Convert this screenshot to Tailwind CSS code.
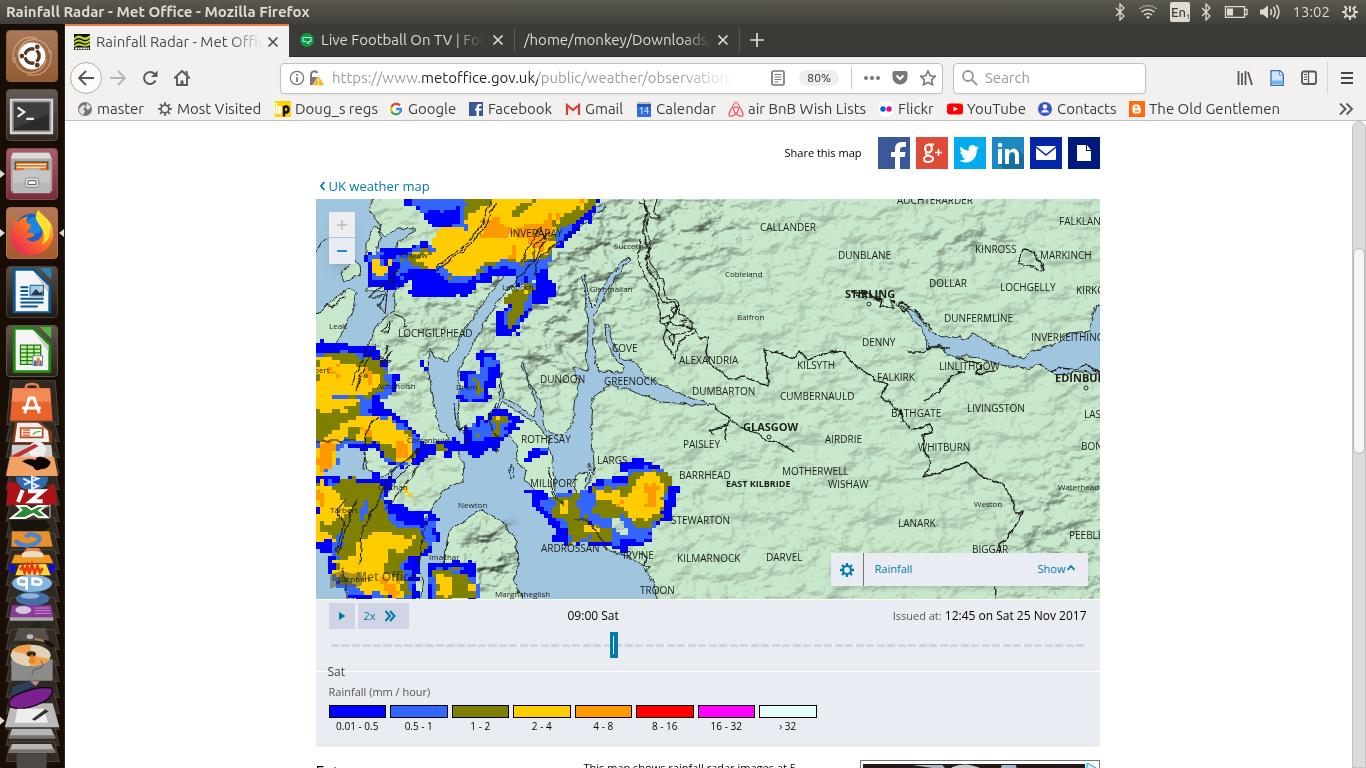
<!DOCTYPE html>
<html lang="en">
<head>
<meta charset="utf-8">
<title>Rainfall Radar - Met Office</title>
<script src="https://cdn.jsdelivr.net/npm/@tailwindcss/browser@4"></script>
</head>
<body class="h-screen flex flex-col overflow-hidden bg-white font-['Ubuntu','Noto_Sans',sans-serif] text-[#3c3c3c]">

<svg class="hidden" aria-hidden="true">
  <symbol id="bt" viewBox="0 0 12 18"><path d="M2 5l8 8-4 4V1l4 4-8 8" fill="none" stroke="#dfdbd2" stroke-width="1.3"/></symbol>
  <symbol id="x" viewBox="0 0 12 12"><path d="M1.500 1.500l9 9M10.500 1.500l-9 9" stroke="currentColor" stroke-width="1.700" fill="none"/></symbol>
  <symbol id="cog" viewBox="0 0 16 16"><circle cx="8" cy="8" r="4.500" fill="none" stroke="currentColor" stroke-width="2.400"/><path d="M8 0v3M8 13v3M0 8h3M13 8h3M2.300 2.300l2.200 2.200M11.500 11.500l2.200 2.200M2.300 13.700l2.200-2.200M11.500 4.500l2.200-2.200" stroke="currentColor" stroke-width="2.600"/></symbol>
</svg>

<header class="h-6 shrink-0 flex items-center justify-between pl-1.5 pr-2 bg-linear-to-b from-[#5b5950] to-[#403f3a] text-[#dfdbd2]">
  <h1 class="text-[15px] leading-6 font-bold">Rainfall Radar - Met Office - Mozilla Firefox</h1>
  <div class="flex items-center">
    <svg class="w-3 h-[18px] mr-3"><use href="#bt"/></svg>
    <svg class="w-5 h-4 mr-3" viewBox="0 0 20 16" fill="none" stroke="#dfdbd2" stroke-width="1.500"><path d="M1 5q9-7 18 0" opacity=".5"/><path d="M3.500 8q6.500-5 13 0M6 11q4-3 8 0"/><path d="M8 13q2-1.500 4 0l-2 2z" fill="#dfdbd2" stroke="none"/></svg>
    <span class="w-5 h-5 mr-2.5 bg-[#dfdbd2] rounded-xs text-[#3c3b37] text-[13px] leading-5 text-center font-medium">En<sub class="text-[7px]">1</sub></span>
    <svg class="w-3 h-[18px] mr-3"><use href="#bt"/></svg>
    <svg class="w-6 h-3 mr-3" viewBox="0 0 24 12"><path d="M1.500.7h19v10.600h-19zM21 3.500h2v5h-2" fill="none" stroke="#dfdbd2" stroke-width="1.300"/><path d="M3 2.500h6v7H3z" fill="#dfdbd2"/></svg>
    <svg class="w-5 h-4 mr-3" viewBox="0 0 20 16"><path d="M0 5.500h3l5-4v13l-5-4H0z" fill="#dfdbd2"/><path d="M10.500 5q2 3 0 6M13.500 3q3.500 5 0 10M16.500 1q5 7 0 14" fill="none" stroke="#dfdbd2" stroke-width="1.500"/></svg>
    <span class="text-[15px] leading-6 mr-3">13:02</span>
    <svg class="size-4" viewBox="0 0 16 16" stroke="#dfdbd2" fill="none"><path d="M5.500 4A4.700 4.700 0 1 0 10.500 4" stroke-width="1.800"/><path d="M8 2v6" stroke-width="2"/><path d="M8 13v3M0 8h3M13 8h3M2.300 2.300l2 2M11.700 11.700l2 2M2.300 13.700l2-2M11.700 4.300l2-2" stroke-width="2"/></svg>
  </div>
</header>

<div class="flex-1 min-h-0 flex">
<!-- Launcher -->
<nav aria-label="Launcher" class="w-[65px] shrink-0 relative bg-[#180e06] border-r border-[#2c2520] flex flex-col items-center gap-[7px] pt-1.5 pr-px overflow-hidden">
  <button aria-label="Dash" class="size-[52px] shrink-0 rounded-sm overflow-hidden border border-[#8b6242] bg-linear-to-b from-[#a9795a] to-[#935b31]"><svg class="size-full" viewBox="0 0 52 52"><path d="M7 33C3 15 16 3 31 8M45 20c4 18-9 29-24 25M11 25C16 0 44 8 44 23M41 29C36 51 8 46 8 27" fill="none" stroke="#e0bc9e" opacity=".6" stroke-width="1.500"/><circle cx="26" cy="26" r="14" fill="#fff"/><circle cx="26" cy="26" r="7.500" fill="none" stroke="#5a3923" stroke-width="3.500"/><path d="M26 26l-10 0M26 26l5-9M26 26l5 9" stroke="#fff" stroke-width="2"/><circle cx="26" cy="26" r="5" fill="#fff"/><g fill="#5a3923" stroke="#fff"><circle cx="15.500" cy="26" r="3"/><circle cx="31.500" cy="16.500" r="3"/><circle cx="31.500" cy="35.500" r="3"/></g></svg></button>
  <button aria-label="Terminal" class="size-[52px] shrink-0 rounded-sm overflow-hidden border border-[#544d48] bg-linear-to-b from-[#625b57] to-[#332a25]"><svg class="size-full" viewBox="0 0 52 52"><path d="M3 9h45v37H3z" fill="#dcdcdc"/><path d="M5 11h41v33H5z" fill="#9a9a9a"/><path d="M7 13h37v29H7z" fill="#2b2b2b"/><path d="M7 13h37v12L7 40z" fill="#4a4a4a" opacity=".6"/><path d="M11 18l7 5-7 5" fill="none" stroke="#eee" stroke-width="2.200"/><path d="M20 30h8" stroke="#eee" stroke-width="2.200"/></svg></button>
  <button aria-label="Files" class="size-[52px] shrink-0 rounded-sm overflow-hidden border border-[#8e4653] bg-linear-to-b from-[#a4616b] to-[#7a2a38]"><svg class="size-full" viewBox="0 0 52 52"><path d="M6 4h38l3 6v34H4V10z" fill="#aaa"/><path d="M6 4h38l2 6H4z" fill="#dadada"/><path d="M8 13h35v12H8z" fill="#3b3029"/><path d="M9 14h33v8H9z" fill="#e8762c"/><path d="M10 16h31M10 19h30" stroke="#ffe5b0" stroke-width="1.300"/><path d="M6 22h10l3-2h14l2 2h10v24H6z" fill="#b9b9b9"/><path d="M6 22h39v13H6z" fill="#cfcfcf" opacity=".6"/><rect x="19" y="30" width="14" height="10" rx="2" fill="#ddd" stroke="#888"/><rect x="22" y="33" width="8" height="4" fill="#fff" stroke="#555"/></svg></button>
  <button aria-label="Firefox" class="size-[52px] shrink-0 rounded-sm overflow-hidden border border-[#ad7350] bg-linear-to-b from-[#b5785a] to-[#a55b2b]"><svg class="size-full" viewBox="0 0 52 52"><defs><linearGradient id="ff" x1="1" y1="0" x2=".1" y2="1"><stop stop-color="#ffd92e"/><stop offset=".45" stop-color="#ff7a1a"/><stop offset="1" stop-color="#e81c63"/></linearGradient></defs><circle cx="26" cy="24" r="18" fill="#1a5fc8"/><circle cx="29" cy="18" r="9" fill="#1b86dd"/><path d="M6 12l5 3c3-4 7-6 11-6-2 2-2 5-1 7 4 0 5 3 3 5-3 2-3 3-2 5 4-2 8 2 6 3-3 1-5 3-8 3 7 6 17 2 17-8-1-6-5-8-7-13 0-3 0-6 3-8 1 5 14 9 15 22 1 14-10 24-23 24C10 49 2 38 4 27c0-4 1-6 3-9z" fill="url(#ff)"/><path d="M30 10c0-3 1-6 3-8 1 5 14 9 15 22-1-3-2-4-3-5 1 10-2 16-9 19 4-7 3-12 0-17-3-4-5-7-6-11z" fill="#ffdf30"/></svg></button>
  <button aria-label="Writer" class="size-[52px] shrink-0 rounded-sm overflow-hidden border border-[#4c443f] bg-linear-to-b from-[#574f4a] to-[#241a14]"><svg class="size-full" viewBox="0 0 52 52"><path d="M6 1h22l18 18v29H6z" fill="#0b588d"/><path d="M34 1h12v12z" fill="#2f7fb3"/><path d="M9 4h18l16 16v26H9z" fill="#f4f4f4"/><path d="M27 4l16 16v7z" fill="#ccc"/><g stroke="#0b588d" stroke-width="2"><path d="M14 21h8M14 25h8M14 29h8M14 33h24M14 37h24M14 41h18"/></g><path d="M24 19h14v11H24z" fill="#9ad0f5" stroke="#0b588d"/><path d="M25 29l5-6 4 4 3-2v4z" fill="#334"/><circle cx="35" cy="22" r="1.500" fill="#fc6"/></svg></button>
  <button aria-label="Calc" class="size-[52px] shrink-0 rounded-sm overflow-hidden border border-[#5f5651] bg-linear-to-b from-[#62564f] to-[#2b201a]"><svg class="size-full" viewBox="0 0 52 52"><path d="M6 1h22l18 18v30H6z" fill="#1c8a10"/><path d="M34 1h12v12z" fill="#51b838"/><path d="M9 4h18l16 16v26H9z" fill="#f4f4f4"/><path d="M27 4l16 16v7z" fill="#ccc"/><path d="M14 20h21v20H14z" fill="#c4f0a8"/><path d="M14 20h21v20H14zM14 24h21M14 28h21M14 32h21M14 36h21M21 20v20M28 20v20" fill="none" stroke="#1c7a10" stroke-width="1.300"/><path d="M27 31h10v10H27z" fill="#fff" stroke="#777"/><path d="M28 36h3v5h-3z" fill="#27c"/><path d="M31 33h3v8h-3z" fill="#f72"/><path d="M34 36h2v5h-2z" fill="#27c"/></svg></button>
  <svg class="absolute left-0 top-[356px] w-16 h-[388px]" viewBox="0 0 192 1164" preserveAspectRatio="none" aria-label="More applications">
    <g fill="#362f29" stroke="#6a625c" stroke-width="2" opacity=".85"><path d="M32 2h134l10 132H20z"/><path id="tl" d="M32 125h132l14 60H18z"/><use href="#tl" y="48"/><use href="#tl" y="96"/><use href="#tl" y="144"/><use href="#tl" y="192"/><use href="#tl" y="240"/><use href="#tl" y="288"/><use href="#tl" y="336"/><use href="#tl" y="384"/><use href="#tl" y="432"/><use href="#tl" y="480"/><use href="#tl" y="528"/><use href="#tl" y="576"/><use href="#tl" y="624"/><use href="#tl" y="672"/><use href="#tl" y="720"/><use href="#tl" y="768"/><use href="#tl" y="816"/><use href="#tl" y="864"/><use href="#tl" y="912"/><use href="#tl" y="960"/></g>
    <path d="M38 25h112l8 97H30z" fill="#e8622a"/><path d="M38 25h112l3 40H35z" fill="#f28a55"/><path d="M78 32V20q0-8 18-8t18 8v12" fill="none" stroke="#ee7c50" stroke-width="8"/><path d="M74 100l14-46h14l16 46M66 84h56" fill="none" stroke="#fff" stroke-width="9"/>
    <path d="M46 126h76l34 30v34H36z" fill="#8a3d10"/><path d="M52 128h62l30 24 4 34H44z" fill="#f0eeee"/><path d="M62 144h66v28H62z" fill="#fff" stroke="#b24a1c" stroke-width="5"/><path d="M68 150h22M68 158h22M68 166h22" stroke="#e06a30" stroke-width="5"/><path d="M98 164l10-8 14-2" stroke="#5b5" stroke-width="4" fill="none"/>
    <path d="M36 194h118l4 38H34z" fill="#ccc"/><circle cx="112" cy="210" r="26" fill="#eee"/><path d="M34 228l70-36 12 6-72 40z" fill="#c22f33"/>
    <path d="M30 230h132l12 58H18z" fill="#f0a263"/><path d="M66 244q20-12 40-4 6-14 24-8 20 8 22 16-8 20-30 20-16 8-22-8-20-8-34-16z" fill="#0b0602"/>
    <path d="M48 290h96q0 40-48 40t-48-40z" fill="#2e6cb0"/><path d="M70 296l44 22-18 8v-36l18 6-42 18" stroke="#dceaff" stroke-width="6" fill="none"/>
    <path d="M24 304l34 8 4 18 76-4 24-18 10 66H20z" fill="#ad1317"/><path d="M54 366l14-36M84 334h44l-36 30h36" stroke="#fff" stroke-width="12" fill="none"/>
    <path d="M34 414l30-24-12-12h28l14 10 20-10h24l-20 14 24 20h-26l-16-10-24 12z" fill="#2e8b35" stroke="#fff" stroke-width="6"/><path d="M130 384l20-8v36" stroke="#aaa" stroke-width="4" fill="none"/>
    <path d="M28 420h110l12 20-30 20-60 4q-30-10-32-44z" fill="#17150d"/>
    <path d="M36 454h112l10 46H34z" fill="#eb8e2d"/><path d="M44 482q30 24 62 8 26-16 0-24-22-8-28 6" fill="none" stroke="#4b86c7" stroke-width="13"/>
    <path d="M80 504h36l14 20H66z" fill="#f0803a"/><path d="M44 524h104l12 26H34z" fill="#f29a1d"/><path d="M66 520q30-16 64 0v12H66z" fill="#e8dccc"/>
    <path d="M28 552h18v30l-18-8zM146 552h20v20l-20 10z" fill="#1212c4"/><path d="M58 554l80-2 14 34H46z" fill="#ffd93b"/><path d="M60 570l8-12 6 20 8-22 6 26 8-28 8 26 8-22 8 20 8-14" stroke="#e83a1a" stroke-width="8" fill="none"/>
    <ellipse cx="96" cy="610" rx="60" ry="26" fill="#82b5e2"/><path d="M80 592v38M80 596q-26-6-26 8t26 8M98 592v20q26 6 26-6t-26-10" stroke="#fff" stroke-width="8" fill="none"/>
    <ellipse cx="98" cy="656" rx="50" ry="21" fill="#456fa4"/><ellipse cx="90" cy="648" rx="28" ry="8" fill="#91b3dc"/>
    <path d="M36 676h118l6 36H30z" fill="#8a3a98"/><ellipse cx="70" cy="690" rx="24" ry="12" fill="#d5c2dc"/><path d="M104 684h44M104 692h46M104 700h48" stroke="#c48bd0" stroke-width="3"/><path d="M30 712h130v10H30z" fill="#aaa"/>
    <path d="M38 772l76-48 14 8-70 50z" fill="#222"/><path d="M56 744h80l12 38H40z" fill="#65605a" opacity=".7"/><path d="M104 776l30 8" stroke="#b88347" stroke-width="6"/><path d="M130 780q20 0 36 20-24 8-36-20" fill="#16110d"/><ellipse cx="90" cy="770" rx="10" ry="7" fill="#bbb"/>
    <path d="M34 838h124v64H34z" fill="#8b8b89"/><ellipse cx="92" cy="826" rx="60" ry="32" fill="#e2d1b4"/><path d="M92 826L34 812q20-20 58-18zM92 826l58 12q-14 20-58 20z" fill="#f0a04c"/><ellipse cx="94" cy="822" rx="14" ry="8" fill="#3a2a1f"/><path d="M96 822q20 30 0 30t0-30" fill="#ea8a1a"/><path d="M96 884q0-16 18-18 24-6 8-24" stroke="#555" stroke-width="3" fill="none"/>
    <path d="M38 920l50-16 30 6-60 30-24 10z" fill="#2d3f5d"/><path d="M90 904h28l-10 14z" fill="#c88"/>
    <path d="M34 970h124l20 72H14z" fill="#bbb"/><path d="M30 980q-14-26 40-44 50-18 84-12 12 20-28 44-60 28-96 12z" fill="#7c2090" stroke="#140a16" stroke-width="4"/><path d="M52 986h80l12 42H44z" fill="#eee"/><path d="M96 1018l40-30 10 6-42 28z" fill="#35322f"/>
    <path d="M36 1046h118l12 28H26zM36 1092h118l12 26H26z" fill="#b5b5b5"/><path d="M26 1066h140v10H26zM26 1108h140v10H26z" fill="#77746f"/><path d="M50 1120h90v44H50z" fill="#4d4a46"/><path d="M0 1010l14 12-14 12z" fill="#ddd"/>
  </svg>
  <svg class="absolute left-0 top-[144px] w-16 h-[72px]" viewBox="0 0 64 72" fill="#dedad5"><path d="M0 2l5 4-5 4zM0 61l5 4-5 4zM64 61l-5 4 5 4z"/></svg>
</nav>

<div class="flex-1 min-w-0 flex flex-col">
<!-- Tab strip -->
<div role="tablist" class="h-[33px] shrink-0 flex items-center bg-[#3c3b37] border-b border-[#2b2a27] text-[#dfdbd2] text-[15px] leading-6">
  <div role="tab" class="w-56 h-[33px] -mb-px shrink-0 flex items-center bg-[#f2f1f0] border-t-2 border-[#f07746] text-[#4c4c4c] pl-[9px] pr-2.5">
    <svg class="size-4 mr-1.5 shrink-0" viewBox="0 0 16 16"><path d="M0 0h16v16H0z" fill="#111"/><path d="M0 4q4-4 8-1.500T16 1v3q-4 3.500-8 1T0 6.500zM0 8q4-4 8-1.500T16 5v2.500q-4 3.500-8 1T0 10zM0 11.500q4-3.500 8-1.500t8-1.500V11q-4 2.500-8 1t-8 1z" fill="#c4d82e"/><path d="M1 14.500h14" stroke="#fff" stroke-width="2" stroke-dasharray="2 .6"/></svg>
    <span class="flex-1 overflow-hidden whitespace-nowrap [mask-image:linear-gradient(to_right,black_80%,transparent)]">Rainfall Radar - Met Office</span>
    <button aria-label="Close tab" class="ml-1"><svg class="size-3"><use href="#x"/></svg></button>
  </div>
  <div role="tab" class="w-[226px] shrink-0 flex items-center pl-[11px] pr-2.5 border-r border-[#5c5b56] h-6">
    <svg class="size-3.5 mr-[7px] shrink-0" viewBox="0 0 14 14"><circle cx="7" cy="7" r="7" fill="#0a9a4a"/><path d="M3 4.500h8v4H8.500V11L6 8.500H3z" fill="none" stroke="#d8f0d8"/></svg>
    <span class="flex-1 overflow-hidden whitespace-nowrap [mask-image:linear-gradient(to_right,black_80%,transparent)]">Live Football On TV | Football</span>
    <button aria-label="Close tab" class="ml-2"><svg class="size-3"><use href="#x"/></svg></button>
  </div>
  <div role="tab" class="w-[225px] shrink-0 flex items-center pl-[9px] pr-2.5 border-r border-[#5c5b56] h-6">
    <span class="flex-1 overflow-hidden whitespace-nowrap [mask-image:linear-gradient(to_right,black_85%,transparent)]">/home/monkey/Downloads/</span>
    <button aria-label="Close tab" class="ml-1.5"><svg class="size-3"><use href="#x"/></svg></button>
  </div>
  <button aria-label="New tab" class="ml-2.5"><svg class="size-3.5" viewBox="0 0 14 14"><path d="M7 0v14M0 7h14" stroke="#dfdbd2" stroke-width="1.700"/></svg></button>
</div>

<!-- Navigation toolbar -->
<div class="h-[42px] shrink-0 flex items-center bg-[#f2f1f0] pl-[5px] pr-3 text-[#5a5a5a]">
  <button aria-label="Back" class="size-8 rounded-full border border-[#b0b0ae] bg-[#fbfbfb] grid place-items-center"><svg class="size-4" viewBox="0 0 16 16" fill="none" stroke="#555" stroke-width="1.900"><path d="M16 8H1M8 1L1 8l7 7"/></svg></button>
  <button aria-label="Forward" class="ml-2 w-4"><svg class="size-4" viewBox="0 0 16 16" fill="none" stroke="#b5b5b5" stroke-width="1.900"><path d="M0 8h15M8 1l7 7-7 7"/></svg></button>
  <button aria-label="Reload" class="ml-4 w-4"><svg class="size-4" viewBox="0 0 16 16"><path d="M13.500 10.500A6 6 0 1 1 12.500 4" fill="none" stroke="#5a5a5a" stroke-width="2"/><path d="M15.500.5V7H9z" fill="#5a5a5a"/></svg></button>
  <button aria-label="Home" class="ml-4 w-4"><svg class="size-4" viewBox="0 0 16 16" fill="none" stroke="#5a5a5a" stroke-width="1.900"><path d="M0 8.500L8 1l8 7.500M3 7v8h10V7"/><path d="M8 10.500V15" stroke-width="3"/><path d="M11 2h2v3" stroke-width="1.500"/></svg></button>
  <div class="ml-[90px] flex-1 min-w-0 h-[31px] flex items-center bg-white border border-[#c2c1bf] rounded shadow-xs pl-2 pr-1.5">
    <svg class="size-4 shrink-0" viewBox="0 0 16 16" fill="none" stroke="#777"><circle cx="8" cy="8" r="6.700" stroke-width="1.200"/><path d="M8 7v5M8 4v1.800" stroke-width="1.700"/></svg>
    <svg class="w-4 h-4 ml-1 shrink-0" viewBox="0 0 16 16"><path d="M2 7V4.500a3.500 3.500 0 0 1 6.500-1.500" fill="none" stroke="#777" stroke-width="2"/><path d="M1 7h9v8H1z" fill="#777"/><path d="M9.500 5.500l6 10h-12z" fill="#ffb31a" stroke="#fff" stroke-width=".5"/><path d="M9.500 9v3M9.500 13v1.200" stroke="#fff" stroke-width="1.300"/></svg>
    <input aria-label="Address" class="ml-[7px] w-[403px] min-w-0 outline-none text-[15px] text-transparent bg-clip-text bg-[linear-gradient(to_right,#999_90px,#222_90px,#222_206px,#999_206px,#999_350px,transparent_403px)]" value="https://www.metoffice.gov.uk/public/weather/observation/">
    <span class="flex-1"></span>
    <button aria-label="Reader view" class="shrink-0"><svg class="w-3.5 h-4" viewBox="0 0 14 16" fill="none" stroke="#777"><rect x="1" y="1" width="12" height="14" rx="1.500" stroke-width="1.700"/><path d="M3.500 4.500h7M3.500 7h7M3.500 9.500h7M3.500 12h4"/></svg></button>
    <button class="ml-3.5 h-4 px-2 rounded-full bg-[#efefef] text-xs leading-4 text-[#333]">80%</button>
    <span class="ml-3 w-px h-[22px] bg-[#c8c8c8]"></span>
    <button aria-label="Page actions" class="ml-3"><svg class="w-4 h-4" viewBox="0 0 16 16" fill="#777"><circle cx="2" cy="8" r="2"/><circle cx="8" cy="8" r="2"/><circle cx="14" cy="8" r="2"/></svg></button>
    <button aria-label="Pocket" class="ml-3"><svg class="w-4 h-4" viewBox="0 0 16 16"><path d="M2 1h12q1.500 0 1.500 1.500V7a7.500 7.500 0 0 1-15 0V2.500Q.5 1 2 1z" fill="#777"/><path d="M4.500 5.500L8 9l3.500-3.500" fill="none" stroke="#fff" stroke-width="2"/></svg></button>
    <button aria-label="Bookmark" class="ml-3"><svg class="w-4 h-4" viewBox="0 0 16 16"><path d="M8 1l2.200 4.700 5 .6-3.700 3.500 1 5L8 12.300l-4.500 2.500 1-5L.8 6.300l5-.6z" fill="none" stroke="#777" stroke-width="1.600"/></svg></button>
  </div>
  <label class="ml-2.5 w-[193px] h-[31px] flex items-center bg-white border border-[#c2c1bf] rounded shadow-xs pl-2">
    <svg class="size-4 shrink-0" viewBox="0 0 16 16" fill="none" stroke="#999" stroke-width="1.900"><circle cx="6" cy="6" r="5"/><path d="M9.500 9.500L15 15"/></svg>
    <input aria-label="Search" placeholder="Search" class="ml-[7px] w-32 outline-none text-[15px] placeholder:text-[#999]">
  </label>
  <button aria-label="Library" class="ml-[91px]"><svg class="size-4" viewBox="0 0 16 16" stroke="#555" stroke-width="1.800"><path d="M1.500 1v14M5 3v12M8.500 1v14M11 2l4 13"/></svg></button>
  <button aria-label="Page" class="ml-4"><svg class="size-4" viewBox="0 0 16 16"><path d="M2 .7h9L14.300 4v11.300H2z" fill="#cfe4fb" stroke="#3a6fb5" stroke-width="1.300"/><path d="M3 10.500h10V14H3z" fill="#6eb5f2"/><path d="M10.500 1v4H14" fill="#fff" stroke="#3a6fb5" stroke-width=".7"/></svg></button>
  <button aria-label="Sidebar" class="ml-4"><svg class="size-4" viewBox="0 0 16 16" fill="none" stroke="#555"><rect x="1" y="1.500" width="14" height="12.500" rx="2" stroke-width="1.800"/><path d="M7.500 2v12M3 4.500h3M3 7h3M3 9.500h3" stroke-width="1.200"/></svg></button>
  <span class="ml-2.5 w-px h-8 bg-[#d6d5d3]"></span>
  <button aria-label="Menu" class="ml-3"><svg class="w-3.5 h-4" viewBox="0 0 14 16" stroke="#444" stroke-width="2"><path d="M1 3h12M1 8h12M1 13h12"/></svg></button>
</div>

<!-- Bookmarks toolbar -->
<div class="h-[22px] shrink-0 flex items-center bg-[#f2f1f0] border-b border-[#c0bfbd] pl-3 pr-3 pb-0.5 text-[15px] leading-5 whitespace-nowrap [&>a]:flex [&>a]:items-center [&>a]:gap-1 [&>a]:shrink-0 [&_svg]:size-4 [&_svg]:shrink-0">
  <a href="#" class="w-20"><svg viewBox="0 0 16 16"><circle cx="8" cy="8" r="7" fill="#777"/><path d="M2 8l4-4 3 1-3 3 2 2-2 4q-4-2-4-6zM10 2l4 4-3 3-2-2z" fill="#e6e6e6"/></svg>master</a>
  <a href="#" class="w-[118px]"><svg viewBox="0 0 16 16" class="text-[#5a5a5a]"><g transform="translate(1 1) scale(.87)" stroke="currentColor" fill="none"><circle cx="8" cy="8" r="4.500" stroke-width="2"/><path d="M8 0v3M8 13v3M0 8h3M13 8h3M2.300 2.300l2 2M11.700 11.700l2 2M2.300 13.700l2-2M11.700 4.300l2-2" stroke-width="2"/></g></svg>Most Visited</a>
  <a href="#" class="w-[113px]"><svg viewBox="0 0 16 16"><path d="M0 0h16v16H0z" fill="#ffd200"/><path d="M1.500 2v11M4 6v6h1.500V6z" fill="none" stroke="#fff" stroke-width="1.800"/><path d="M9 15.500V5M9.500 5.500h1.500q2.500 0 2.500 3t-2.500 3H9.500" fill="none" stroke="#111" stroke-width="2.400"/></svg>Doug_s regs</a>
  <a href="#" class="w-20"><svg viewBox="0 0 16 16" fill="none" stroke-width="2.400"><circle cx="8" cy="8" r="8" fill="#fff"/><path d="M12 4.500A5 5 0 0 0 3.500 6" stroke="#ea4335"/><path d="M3.500 6a5 5 0 0 0 0 4.500" stroke="#fbbc05"/><path d="M3.500 10.500a5 5 0 0 0 8 1.500" stroke="#34a853"/><path d="M11.500 12A5 5 0 0 0 13 8H8" stroke="#4285f4"/></svg>Google</a>
  <a href="#" class="w-[97px]"><svg viewBox="0 0 16 16"><path d="M1 1h14v14H1z" fill="#3b5998"/><path d="M11 15V9.500h2.500v-2H11V6q0-1 1-1h1.500V3H11.500Q8.500 3 8.500 6v1.500H7v2h1.500V15z" fill="#fff"/></svg>Facebook</a>
  <a href="#" class="w-[71px]"><svg viewBox="0 0 16 16"><path d="M1 3h14v11H1z" fill="#eee"/><path d="M2 14V4l6 5 6-5v10" fill="none" stroke="#d93f35" stroke-width="2.200"/></svg>Gmail</a>
  <a href="#" class="w-[92px]"><svg viewBox="0 0 16 16"><path d="M1 2h14v14H1z" fill="#2f6fe0"/><path d="M1 1h14v2H1z" fill="#bbb"/><path d="M1 3h14v3H1z" fill="#2558bd"/><text x="8" y="13" font-size="9" fill="#fff" text-anchor="middle">14</text></svg>Calendar</a>
  <a href="#" class="w-[150px]"><svg viewBox="0 0 16 16"><path d="M8 1C6.500 1 1 12 1 13q0 2.300 2 2.300c3 0 7.500-4.500 7.500-7a2.500 2.500 0 0 0-5 0c0 2.500 4.500 7 7.500 7q2 0 2-2.300C15 12 9.500 1 8 1z" fill="none" stroke="#f4525b" stroke-width="1.200"/></svg>air BnB Wish Lists</a>
  <a href="#" class="w-[69px]"><svg viewBox="0 0 16 16"><circle cx="8" cy="8" r="8" fill="#fff"/><circle cx="5" cy="8" r="2.700" fill="#0063dc"/><circle cx="11" cy="8" r="2.700" fill="#ff0084"/></svg>Flickr</a>
  <a href="#" class="w-[90px]"><svg viewBox="0 0 16 16"><rect y="2.500" width="16" height="11" rx="3" fill="#f00"/><path d="M6.500 5.500v5L11 8z" fill="#fff"/></svg>YouTube</a>
  <a href="#" class="w-[92px]"><svg viewBox="0 0 16 16"><circle cx="8" cy="8" r="7" fill="#3558c4"/><circle cx="8" cy="5.500" r="2.300" fill="#fff"/><path d="M3.500 11.500q4.500-6 9 0z" fill="#fff"/></svg>Contacts</a>
  <a href="#"><svg viewBox="0 0 16 16"><path d="M0 0h16v16H0z" fill="#ff6a0a"/><path d="M5.500 3.500h3q2.500 0 2.500 2.500v1.500h1v2.500q0 2.500-2.500 2.500h-4Q3.500 12.500 3.500 10V6q0-2.500 2-2.500z" fill="#fff"/><path d="M6 6.500h2.500M6 9.800h4" stroke="#ff6a0a" stroke-width="1.300"/></svg>The Old Gentlemen</a>
  <span class="flex-1"></span>
  <button aria-label="More bookmarks"><svg viewBox="0 0 16 16" fill="none" stroke="#5a5a5a" stroke-width="1.900"><path d="M2 2.500L7.500 8 2 13.500M8.500 2.500L14 8l-5.500 5.500"/></svg></button>
</div>

<!-- Page -->
<div class="flex-1 min-h-0 flex bg-white font-['Open_Sans','Noto_Sans',sans-serif] text-black">
<main class="flex-1 min-w-0 overflow-hidden pr-0.5">
 <div class="w-[784px] mx-auto pt-4">
  <div class="flex items-center justify-end gap-1.5 text-[11px]">
    <span class="mr-2.5">Share this map</span>
    <a href="#" aria-label="Facebook" class="size-8 bg-[#3b5998]"><svg viewBox="0 0 32 32"><path d="M17 32V20h-4v-5h4v-3q0-7 7-7h4v5h-3q-3 0-3 3v2h5.500l-.7 5H22v12z" fill="#fff"/></svg></a>
    <a href="#" aria-label="Google plus" class="size-8 bg-[#dd4b39]"><svg viewBox="0 0 32 32" fill="none" stroke="#fff"><ellipse cx="12.500" cy="11.500" rx="3.300" ry="4" stroke-width="2.200"/><path d="M13 7.500h5M10 15.500q-1 2 2.500 3 5 1.500 4.500 3.500-.5 3-5 3-4 0-4-3t6-3.500" stroke-width="1.900"/><path d="M22.500 12v7M19 15.500h7" stroke-width="1.600"/></svg></a>
    <a href="#" aria-label="Twitter" class="size-8 bg-[#00aced]"><svg viewBox="0 0 32 32"><path d="M25 10.500l-2 .6 1.500-2.200-2.600 1a4 4 0 0 0-7 3.800q-5-.2-8-4.200-2 3.200 1.200 5.600l-1.800-.5q.2 3.200 3.200 4.100l-1.800.1q1 2.700 3.800 2.900-2.500 2-6 1.700c8 5 17.500.5 17.300-10.600z" fill="#fff"/></svg></a>
    <a href="#" aria-label="LinkedIn" class="size-8 bg-[#1e88c3]"><svg viewBox="0 0 32 32"><path d="M26 12l6 6v14H12l-5-5z" fill="#146f9f"/><path d="M6 12h4v15H6zM13 12h4v2q5-5 9 0 1 2 1 4v9h-4v-8q0-4-3-4t-3 4v8h-4z" fill="#fff"/><circle cx="8" cy="8" r="2.300" fill="#fff"/></svg></a>
    <a href="#" aria-label="Email" class="size-8 bg-[#0526a5]"><svg viewBox="0 0 32 32"><rect x="6" y="9" width="20" height="14" rx="1" fill="#fff"/><path d="M6 10l10 8 10-8" fill="none" stroke="#0526a5" stroke-width="1.600"/></svg></a>
    <a href="#" aria-label="Print" class="size-8 bg-[#00197c]"><svg viewBox="0 0 32 32"><path d="M9 8h9v6h5v10H9zM19 8l4 5h-4z" fill="#fff"/></svg></a>
  </div>
  <a href="#" class="flex items-center gap-1 mt-2 h-[22px] pl-1 pb-1 text-[13px] leading-[18px] text-[#007aa9]"><svg class="w-[5px] h-2.5" viewBox="0 0 5 10"><path d="M4.500 1L1 5l3.500 4" fill="none" stroke="currentColor" stroke-width="1.800"/></svg>UK weather map</a>

  <div class="relative h-[400px] overflow-hidden bg-[#c8e8cb]">
   <svg id="map" class="w-full h-full" viewBox="0 0 784 400">
    <defs>
     <filter id="relief" x="0" y="0" width="100%" height="100%" color-interpolation-filters="sRGB"><feTurbulence type="fractalNoise" baseFrequency=".035 .05" numOctaves="4" seed="8"/><feColorMatrix values="0 0 0 0 0 0 0 0 0 0 0 0 0 0 0 1 0 0 0 0"/><feDiffuseLighting surfaceScale="12" diffuseConstant="1.250" lighting-color="#fff"><feDistantLight azimuth="225" elevation="60"/></feDiffuseLighting></filter>
     <filter id="coast" x="-2%" y="-2%" width="104%" height="104%"><feTurbulence type="fractalNoise" baseFrequency=".11" numOctaves="3" seed="3" result="n"/><feDisplacementMap in="SourceGraphic" in2="n" scale="6" xChannelSelector="R" yChannelSelector="G"/></filter>
     <filter id="soft"><feGaussianBlur stdDeviation="14"/></filter>
     <mask id="hills"><rect width="784" height="400" fill="#4c4c4c"/><g filter="url(#soft)" fill="#fff"><path d="M120 60L290 0H420L430 50 340 70 320 120 290 130 250 190 215 190 150 110z" opacity=".85"/><path d="M560 85L620 30 680 15 700 50 590 80z" opacity=".55"/><path d="M90 100L170 80 130 150 80 210 60 190z" opacity=".5"/><path d="M784 230L720 280 690 340 710 400H784z" opacity=".5"/></g></mask>
     <mask id="arran"><ellipse cx="172" cy="360" rx="26" ry="36" fill="#fff" filter="url(#soft)"/></mask>
    </defs>
    <rect width="784" height="400" fill="#c8e8cb"/>
    <rect width="784" height="400" filter="url(#relief)" mask="url(#hills)" class="mix-blend-multiply" opacity=".7"/>
    <g filter="url(#coast)" stroke="#27302f" stroke-linejoin="round">
    <g fill="#a0c5df" stroke-width="1">
     <path d="M-12-12H60L53 12 62 22 68 38 82 29 100 30 97 34 82 42 80 55 88 70 92 66 86 80 78 96 80 112 70 116 60 130 52 145 45 165 36 190 30 203 60 215 52 225 48 255 52 270 64 280 110 245 108 252 80 280 66 300 46 333 42 360 36 412H-12z"/>
     <path d="M114 148L113 175 118 203 123 229 138 246 147 262 148 282 127 292 110 319 103 349 100 366 107 379 103 412H128L127 366 133 332 153 318 167 311 190 326 200 342 203 366 197 382 213 412H341L339 386 327 366 307 356 294 352 287 346 270 315 263 298 274 283 273 265 279 276 276 240 275 219 276 199 294 186 307 189 334 199 347 203 384 207 397 206 374 199 341 184 329 176 317 162 304 159 297 142 292 126 289 124 290 140 298 158 308 168 305 173 284 172 279 160 277 132 279 116 294 86 314 59 311 57 290 83 280 103 275 108 268 75 266 78 271 108 272 140 270 160 272 172 255 168 264 180 261 190 257 224 248 236 230 233 224 200 212 180 206 161 204 165 216 190 221 208 218 218 200 206 188 200 185 175 184 202 176 220 183 245 180 254 170 246 160 244 148 236 142 225 143 200 143 170 160 140 178 107 190 92 218 78 222 60 245 41 265 28 290 8 286 4 262 20 235 32 218 46 208 63 185 80 165 107 148 132 140 150 130 163 118 158z"/>
     <path d="M581 105L599 114 609 126 621 137 636 139 645 136 648 141 657 135 677 146 694 154 707 159 714 152 737 146 754 134 774 132 781 106 798 100V176L764 172 741 176 724 166 711 169 684 166 657 157 631 157 624 146 612 149 607 132 591 112z"/>
    </g>
    <g fill="#c8e8cb" stroke-width="1">
     <path d="M-12 125L15 103 33 88 41 95 38 108 28 130 18 150-12 196z"/><path d="M24 75L36 60 44 65 45 77 28 82zM50 45L58 28 65 30 60 60 50 62zM48 92L72 72 90 66 80 88 62 92z"/>
     <path d="M188 203L202 214 218 222 232 240 236 262 240 285 239 306 226 298 208 281 210 272 201 262 200 244 190 233 178 220z"/><path d="M257 285L264 274 271 273 270 290 262 297z"/><path d="M192 268l4-2 2 12-3 3z" fill="#a0c5df"/>
     <path d="M128 412L127 366 133 332 153 318 167 311 190 326 200 342 203 366 197 382 213 412z"/>
    </g>
    </g>
    <rect x="127" y="311" width="76" height="89" class="mix-blend-multiply" filter="url(#relief)" mask="url(#arran)"/>
    <g id="rain" shape-rendering="crispEdges"></g>
    <g fill="none" stroke="#1c1c1c" stroke-width="1.100" stroke-linejoin="round" filter="url(#coast)">
     <path stroke-width="1.400" d="M325-6L331 14 328 20 328 34 333 56 329 62 334 72 341 80 343 96 346 104 358 104 360 110 354 124 366 127 380 131 384 139 393 139 390 152 392 162 403 170 412 180 430 178 445 186 452 187 453 180 448 150 462 154 478 159 484 152 492 161 508 155 528 152 534 162 556 178 564 184 572 185 566 198 584 212 586 222 598 230 614 226 616 234 606 236 610 258 614 264 608 278 624 273 651 264 662 275 688 286 696 302 700 314 707 314 704 320 691 340 683 346 684 360 674 374 680 392 678 412"/>
     <path d="M323 5l7 2 4 12h10l-6-8 3-12M330 20l4 26-4 12 16 22 5 20 10 2 3 12 12 10 0 8-18 4-13-14-5-26-14-26-4-10 2-20M352 124l-5 16 6 10 6 11 2-14 10-10 10-4M345 120l8-4 2 8-8 1zM356 110l5-4-1 9zM364 122l5-1-2 4zM354 138l4-4 2 4-4 8z"/>
     <path stroke-width="1.300" d="M397 206l12 10 18 14 15 5 10 6 16 4 10 8M415 218l-6 14 2 10M412 226l-18 5 4 5M611 140l5 9M592 153l14 0 18-6M611 149l22 0M703 65l4-15 10 2 10 14 2 6-14-4-12-4z"/>
     <path d="M537 93l14 0 5 5 10 2-2 8 14 0-4-8 6 3M540 96l10 3M545 91l20 11M582 107l6 6 5-5-8-4zM598 110l6 8 12 12M640 158l26 8-6 8 20-2M648 172l-12 4-14 18-14 8M734 173l12-4 14 2 8-6 16 8" stroke-width="1.400"/>
     <path d="M0 115l10-8 6 2 12-12M66 130l10-8-4 12zM52 98l20-16 10-12-6 18-12 10zM62 106l8-10-2 18zM78 115l8 3 2 10 4-1M50 150l-8 22-6 14M60 144l-10 22-10 26M72 146l-8 18 12-12-10 16M205 62l12-22 8-12 4 12-10 22zM174 2l-8 24-18 22-28 20M180 4l-10 22-20 24-30 22M30 412l0-30-5-16M48 270l2-40 12-12M110 245l-34 28-12 26-18 32-2 34M70 310l38 -50M40 300l-10 30-8 26M30 300l-8 10 6 16-8 28M0 242h40M294 352l-7-8M324 354l6 4-2 8 6 2-4 4M0 53l8-12 4-2M138 204l2 20 4 8 6-6 2 20M178 250l5 2M62 156l14 6-8 4M180 205l-8 14 10 20M102 366l3-20 5-24M128 372l2-30M232 268l6 30 10 8M258 320l14 0 16 24"/>
     <path d="M218 78L222 60 245 41 265 28M190 92L218 64 218 46 235 32"/>
    </g>
    <g fill="#d8e8dc" stroke="#222"><circle cx="553" cy="105" r="2"/><circle cx="453" cy="238" r="2"/><circle cx="770" cy="189" r="2"/></g>
    <g opacity=".5"><path d="M14 376q10-6 20-2 6 2 12-2v14q-6 4-12 2-10-4-20 2z" fill="#5b5b3a"/><text x="40" y="382" font-size="12" font-weight="600">Met Office</text></g>
    <g id="labels" font-family="Open Sans, Noto Sans, sans-serif" fill="#1a1f1a" font-size="10"></g>
   </svg>
   <div class="absolute left-[13px] top-[13px] flex flex-col gap-px shadow-lg">
     <button aria-label="Zoom in" class="w-[26px] h-[25px] bg-[#eeeef0] text-[#bbb] grid place-items-center"><svg class="size-2.5" viewBox="0 0 10 10"><path d="M5 0v10M0 5h10" stroke="currentColor" stroke-width="1.500"/></svg></button>
     <button aria-label="Zoom out" class="w-[26px] h-[26px] bg-[#eaecf4] text-[#007aa9] grid place-items-center"><svg class="size-2.5" viewBox="0 0 10 10"><path d="M0 5h10" stroke="currentColor" stroke-width="1.700"/></svg></button>
   </div>
   <div class="absolute right-3 bottom-[13px] flex gap-px h-[33px] text-[11px] text-[#007aa9] bg-[#777] shadow-md">
     <button aria-label="Settings" class="w-8 bg-[#eaecf4] grid place-items-center"><svg class="size-3.5"><use href="#cog"/></svg></button>
     <button class="w-56 bg-[#eaecf4] flex items-center justify-between pl-[11px] pr-3"><span>Rainfall</span><span class="flex items-center">Show<svg class="w-2.5 h-2 mb-1" viewBox="0 0 10 8"><path d="M1.500 6L5 2l3.500 4" fill="none" stroke="currentColor" stroke-width="1.800"/></svg></span></button>
   </div>
  </div>

  <section class="mt-px bg-[#eaecf4] h-[147px]">
   <div class="flex items-center px-[13px] pt-[3px] text-xs">
     <button aria-label="Play" class="w-[26px] h-[26px] bg-[#cfd5e4] grid place-items-center text-[#007aa9]"><svg class="w-2 h-2.5" viewBox="0 0 8 10"><path d="M1 1l6.500 4L1 9z" fill="currentColor"/></svg></button>
     <button class="ml-[3px] w-[51px] h-[26px] bg-[#cfd5e4] flex items-center gap-2 pl-1.5 text-[11px] text-[#007aa9]">2x<svg class="size-3" viewBox="0 0 12 12"><path d="M1.500 1l4.500 5-4.500 5M6 1l4.500 5L6 11" fill="none" stroke="currentColor" stroke-width="2"/></svg></button>
     <span class="ml-[159px]">09:00 Sat</span>
     <span class="ml-auto"><span class="text-[11px] text-[#555]">Issued at:</span> 12:45 on Sat 25 Nov 2017</span>
   </div>
   <div class="px-[15px] mt-[3px]">
     <input type="range" min="0" max="72" value="27" aria-label="Time" class="block w-full h-[26px] appearance-none bg-[repeating-linear-gradient(to_right,#cfd5e4_0_8px,transparent_8px_10.5px)] bg-[length:100%_3px] bg-no-repeat bg-center [&::-webkit-slider-thumb]:appearance-none [&::-webkit-slider-thumb]:w-2 [&::-webkit-slider-thumb]:h-[26px] [&::-webkit-slider-thumb]:bg-[linear-gradient(to_right,#007aa9_3px,#fff_3px,#fff_4px,#007aa9_4px)] [&::-webkit-slider-thumb]:border-y-4 [&::-webkit-slider-thumb]:border-[#007aa9]">
   </div>
   <div class="mt-1 flex items-center relative text-xs text-[#444]"><span class="absolute inset-x-0 top-[9px] h-px bg-white"></span><span class="relative pl-3 leading-5">Sat</span></div>
   <p class="pl-[13px] mt-0.5 text-[11px] leading-4 text-[#555]">Rainfall (mm / hour)</p>
   <ul class="ml-[13px] mt-[5px] w-[488px] grid grid-cols-8 gap-x-1 text-[10px] leading-4 text-center">
     <li><span class="block h-[13px] bg-[#0000ff] border border-black"></span>0.01 - 0.5</li>
     <li><span class="block h-[13px] bg-[#3366ff] border border-black"></span>0.5 - 1</li>
     <li><span class="block h-[13px] bg-[#808000] border border-black"></span>1 - 2</li>
     <li><span class="block h-[13px] bg-[#ffcc00] border border-black"></span>2 - 4</li>
     <li><span class="block h-[13px] bg-[#ff9900] border border-black"></span>4 - 8</li>
     <li><span class="block h-[13px] bg-[#ff0000] border border-black"></span>8 - 16</li>
     <li><span class="block h-[13px] bg-[#ff00ff] border border-black"></span>16 - 32</li>
     <li><span class="block h-[13px] bg-[#e5ffff] border border-black"></span>› 32</li>
   </ul>
  </section>
  <div class="flex mt-[13px]">
    <h2 class="w-[268px] text-base leading-5 pt-0.5">Extremes</h2>
    <p class="w-[276px] text-[11px] leading-4">This map shows rainfall radar images at 5</p>
    <div class="flex-1 h-40 border border-[#777] p-0.5"><svg class="w-full h-full" viewBox="0 0 236 154" preserveAspectRatio="none"><path d="M0 1h224v153H0z" fill="#241a1a"/><path d="M50 2l20 3 8 6h10l-8-9zM140 2h14l4 12h-22z" fill="#a9b4c4"/><path d="M90 4q14-6 30 2l6 6H84z" fill="#ccc"/><path d="M226 0l9 5-9 6z" fill="#d8f4fa" stroke="#00aecd"/></svg></div>
  </div>
 </div>
</main>
<div class="w-3.5 shrink-0 bg-[#dcdbda] rounded-t-full border border-[#c4c3c1] relative" aria-hidden="true"><span class="absolute inset-x-0 top-[126px] h-[206px] rounded-full bg-[#f6f5f5] border border-[#b9b8b6]"></span></div>
</div>
</div>
</div>

<script>
// Place names: [x, baseline y, text, style]  (t = town, v = village, b = city)
const names=[[194,38,'INVERARAY','t'],[83,59,'Kintraw','v'],[298,50,'Succoth','v'],[186,91,'Leapoch','v'],[274,93,'Glenmallan','v'],[13,130,'Lealt','v'],[82,138,'LOCHGILPHEAD','t'],[-2,174,'bert','v'],[61,190,'Achahoish','v'],[140,191,'Drum','v'],[224,184,'DUNOON','t'],[91,244,'Corranbuie','v'],[205,244,'ROTHESAY','t'],[214,288,'MILLPORT','t'],[62,291,'Clachan','v'],[142,309,'Newton','v'],[14,314,'Tarbert','v'],[225,353,'ARDROSSAN','t'],[113,361,'Imachar','v'],[22,383,'Glenbarr','v'],[179,398,'Margnaheglish','v'],[296,153,'COVE','t'],[288,186,'GREENOCK','t'],[281,265,'LARGS','t'],[307,360,'IRVINE','t'],[324,395,'TROON','t'],[444,32,'CALLANDER','t'],[409,78,'Cobleland','v'],[421,121,'Balfron','v'],[363,165,'ALEXANDRIA','t'],[376,196,'DUMBARTON','t'],[481,170,'KILSYTH','t'],[464,201,'CUMBERNAULD','t'],[427,232,'GLASGOW','b'],[367,249,'PAISLEY','t'],[509,244,'AIRDRIE','t'],[363,280,'BARRHEAD','t'],[466,276,'MOTHERWELL','t'],[410,288,'EAST KILBRIDE','s'],[512,289,'WISHAW','t'],[355,325,'STEWARTON','t'],[361,363,'KILMARNOCK','t'],[450,362,'DARVEL','t'],[582,328,'LANARK','t'],[656,354,'BIGGAR','t'],[658,308,'Weston','v'],[742,291,'Waterheads','v'],[753,340,'PEEBLES','t'],[765,251,'BONNYRIGG','t'],[768,219,'LASSWADE','t'],[651,213,'LIVINGSTON','t'],[602,252,'WHITBURN','t'],[575,218,'BATHGATE','t'],[561,182,'FALKIRK','t'],[546,147,'DENNY','t'],[623,171,'LINLITHGOW','t'],[715,142,'INVERKEITHING','t'],[739,183,'EDINBURGH','b'],[628,123,'DUNFERMLINE','t'],[760,95,'KIRKCALDY','t'],[684,92,'LOCHGELLY','t'],[613,88,'DOLLAR','t'],[724,60,'MARKINCH','t'],[659,54,'KINROSS','t'],[743,26,'FALKLAND','t'],[581,5,'AUCHTERARDER','t'],[522,60,'DUNBLANE','t'],[529,99,'STIRLING','b']];
const NS='http://www.w3.org/2000/svg', L=document.getElementById('labels');
for(const [x,y,s,k] of names){const t=document.createElementNS(NS,'text');t.setAttribute('x',x);t.setAttribute('y',y);t.textContent=s;
 if(k==='v')t.setAttribute('font-size',8);if(k==='b'){t.setAttribute('font-weight',700);t.setAttribute('font-size',11)}if(k==='s'){t.setAttribute('font-weight',700);t.setAttribute('font-size',9)}L.append(t)}

// Rain areas, painted in order: [level, tile x, tile y, points in thirds of a pixel]; level 0 clears.
const A=[0,-1],B=[0,199],C=[274,199];
const areas=[
[1,A,'268,0 268,20 290,40 320,50 350,85 375,90 355,130 280,145 270,160 210,145 150,180 150,250 215,275 280,250 290,292 400,295 460,290 520,240 590,230 595,262 660,250 600,300 580,290 570,335 535,350 540,410 590,415 620,380 640,330 700,315 720,255 690,235 715,160 750,120 830,60 860,0'],
[1,A,'0,430 80,428 120,450 180,450 190,480 215,510 248,525 245,575 205,600 0,600'],[1,A,'490,455 545,460 550,510 520,600 430,600 430,525 490,525'],[1,A,'312,485 330,490 330,525 315,525'],[1,A,'0,322 8,322 8,335 0,335'],
[2,A,'290,0 300,25 320,45 400,40 440,30 430,75 375,85 350,135 285,160 280,210 380,220 385,255 440,265 520,210 590,205 605,250 640,245 620,300 570,330 560,380 600,375 640,315 660,240 700,205 710,150 780,80 850,0'],
[1,A,'330,40 430,50 410,75 360,80'],[2,A,'160,180 215,150 232,200 215,245 160,235'],[1,A,'200,160 240,150 240,250 210,230'],[2,A,'240,175 290,160 290,200 250,240'],
[2,A,'0,460 100,455 130,470 190,490 230,540 220,600 0,600'],[2,A,'500,480 545,485 520,510 500,600 440,600 445,540 495,530'],
[3,A,'310,0 440,0 445,60 470,85 465,115 380,95 350,150 285,170 290,205 385,212 430,245 480,225 520,195 600,182 625,195 705,178 720,100 790,60 830,30 845,0'],[3,A,'585,275 655,262 650,300 620,320 600,390 580,390 575,300'],[3,A,'0,470 110,465 190,492 212,560 170,600 0,600'],[3,A,'470,545 500,545 495,590 470,590'],[3,A,'245,180 262,180 262,200 245,200'],
[4,A,'450,50 520,25 540,0 820,0 800,30 720,70 700,160 640,185 520,180 490,205 440,245 390,210 290,190 285,170 350,160 370,90 440,80 470,100'],[4,A,'165,190 215,190 205,240 165,225'],[4,A,'0,485 70,485 110,500 150,525 210,550 150,580 140,600 0,600'],[4,A,'625,275 640,275 640,290 625,290'],
[3,A,'590,30 640,0 670,0 600,65'],[3,A,'720,70 770,50 720,100'],
[5,A,'500,65 550,62 590,90 680,78 720,50 715,100 690,120 680,160 650,150 630,120 500,110'],[5,A,'580,150 605,140 600,180 580,175'],[5,A,'395,190 420,182 400,205'],[5,A,'140,515 160,515 195,550 150,555'],[5,A,'50,505 65,505 65,530 50,535'],[5,A,'780,0 820,0 800,22'],
[1,B,'0,0 205,0 200,40 240,50 310,110 330,130 340,140 400,115 445,140 445,165 340,170 260,215 200,200 190,155 150,160 60,235 0,245'],
[2,B,'0,0 170,0 160,50 230,60 300,110 315,150 270,200 210,190 190,140 110,130 60,230 0,235'],
[1,B,'0,65 30,65 25,90 0,95'],[3,B,'0,30 120,0 140,30 125,70 230,75 290,110 300,180 260,195 210,180 190,135 110,130 60,100 0,120'],
[4,B,'0,0 130,0 110,30 20,40 0,30'],[4,B,'0,140 60,100 90,70 120,65 240,55 240,90 290,130 285,190 240,190 230,140 160,120 100,120 65,150 60,210 0,235'],
[3,B,'80,95 125,80 130,110 100,130'],[5,B,'10,135 60,135 55,210 10,215'],[5,B,'140,85 165,85 165,115 140,105'],[5,B,'235,130 275,130 270,180 235,180'],
[0,B,'75,150 110,140 190,165 200,205 250,225 170,240 140,230 0,245 60,200'],[3,B,'350,140 400,140 400,152 350,152'],
[1,B,'0,245 60,235 200,230 250,240 210,300 275,335 360,352 375,420 310,490 300,603 110,603 60,560 30,520 50,455 0,455'],
[2,B,'40,250 200,245 200,310 240,370 320,385 330,365 360,375 350,440 270,490 290,560 290,603 120,595 50,550 60,470 50,430 0,430'],
[3,B,'50,260 110,235 200,270 195,330 230,380 330,400 320,460 250,480 265,540 290,590 200,590 110,570 60,530 60,480 90,400 0,430 0,260'],
[4,B,'0,250 40,260 90,300 100,340 60,360 60,430 0,435'],[4,B,'120,440 190,400 300,420 290,445 210,460 200,520 260,550 270,590 160,590 110,560 60,520 60,490 120,480'],[3,B,'10,375 60,375 60,420 20,400'],[5,B,'0,275 20,275 20,325 0,325'],[2,B,'125,330 160,315 155,345 125,370'],[5,B,'195,545 255,545 250,595 190,570'],[4,B,'270,275 283,275 283,288 270,288'],
[1,B,'345,505 475,482 480,560 495,580 470,603 340,603'],[2,B,'345,520 420,500 475,540 490,590 345,603'],[3,B,'360,515 460,520 475,560 470,603 360,603'],[4,B,'360,530 405,530 405,590 360,600'],[4,B,'445,550 470,550 470,570 445,570'],
[1,B,'445,80 520,50 505,32 565,28 625,85 575,115 540,145 480,178 440,160'],[2,B,'465,90 540,60 590,60 570,100 520,130 465,125'],[3,B,'530,45 560,55 565,90 535,115'],[4,B,'540,55 552,55 550,85 540,85'],[3,B,'485,105 497,105 497,118 485,118'],
[1,B,'638,150 705,138 692,172 638,187'],[2,B,'670,145 692,145 690,165 670,165'],[1,B,'465,0 520,0 500,10 465,8'],
[1,B,'635,270 675,272 720,300 770,275 815,290 815,265 870,240 870,445 720,432 690,360 640,310'],[2,B,'660,300 700,300 790,280 870,260 870,425 755,420 740,380 700,350 665,315'],[3,B,'710,300 790,290 800,350 860,360 870,425 760,430 755,370 710,355'],[4,B,'735,320 755,315 755,350 735,355'],[4,B,'810,375 840,385 835,400 810,395'],[2,B,'790,290 815,290 810,370 790,355'],
[1,C,'0,255 60,238 110,240 95,205 150,178 215,200 245,235 265,270 255,350 240,368 200,370 180,430 120,450 75,450 0,440'],
[2,C,'20,255 70,245 120,250 110,215 170,205 240,235 245,290 210,330 200,360 180,420 100,430 70,435 0,430 0,290'],
[1,C,'215,310 255,290 255,350 205,365'],
[3,C,'10,270 115,260 125,220 200,210 255,240 240,280 215,335 190,385 150,390 90,350 40,360 10,340'],[3,C,'0,380 60,395 60,430 0,430'],
[4,C,'20,280 60,275 125,300 135,240 180,225 235,265 215,330 180,360 130,360 90,325 40,305'],[4,C,'0,380 20,390 20,402 0,405'],[5,C,'170,255 210,265 185,325 165,340 170,300'],[5,C,'80,305 95,305 95,320 80,320'],
[0,C,'62,365 82,358 108,370 110,408 85,410 62,390'],[3,C,'130,395 142,395 142,410 130,410']];
const W=196,H=115,CW=4,CH=3.5,grid=new Uint8Array(W*H);
const inside=(p,x,y)=>{let c=false;for(let i=0,j=p.length-1;i<p.length;j=i++){const[a,b]=p[i],[d,e]=p[j];if((b>y)!==(e>y)&&x<(d-a)*(y-b)/(e-b)+a)c=!c}return c};
const rnd=(x,y,k)=>{const s=Math.sin(x*127.1+y*311.7+k*74.7)*43758.5453;return s-Math.floor(s)-.5};
for(const [lv,o,str] of areas){const p=str.split(' ').map(q=>{const[a,b]=q.split(',');return[a/3+o[0],b/3+o[1]]});
 for(let y=0;y<H;y++)for(let x=0;x<W;x++){if(inside(p,(x+.5)*CW+rnd(x>>1,y>>1,lv)*6,(y+.5)*CH+rnd(x>>1,y>>1,lv+9)*6))grid[y*W+x]=lv}}
['#0000ff','#3366ff','#808000','#ffcc00','#ff9900'].forEach((c,i)=>{let d='';for(let y=0;y<H;y++)for(let x=0;x<W;x++)if(grid[y*W+x]===i+1){let n=1;while(x+n<W&&grid[y*W+x+n]===i+1)n++;d+=`M${x*CW} ${y*CH}h${n*CW}v${CH}h${-n*CW}z`;x+=n-1}
 const e=document.createElementNS(NS,'path');e.setAttribute('d',d);e.setAttribute('fill',c);document.getElementById('rain').append(e)});
</script>
</body>
</html>
